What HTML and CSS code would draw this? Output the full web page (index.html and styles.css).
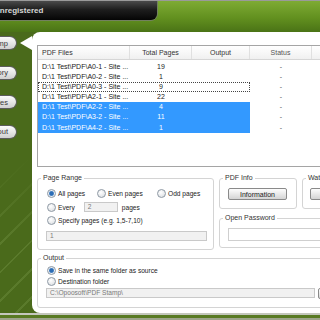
FILE: index.html
```html
<!DOCTYPE html>
<html lang="en">
<head>
    <meta charset="UTF-8">
    <title>PDF Stamp</title>
    <link rel="stylesheet" href="styles.css">
</head>
<body>
    <div class="app">
        <header class="topbar">
            <div class="titlebar"><span class="title">Unregistered</span></div>
        </header>

        <div class="main">
            <nav class="sidebar">
                <div class="navbtn">Stamp</div>
                <div class="navbtn">History</div>
                <div class="navbtn">Files</div>
                <div class="navbtn">About</div>
            </nav>

            <section class="panel">
                <div class="filelist">
                    <div class="list-head">
                        <span class="col-name">PDF Files</span>
                        <span class="col-pages">Total Pages</span>
                        <span class="col-out">Output</span>
                        <span class="col-status">Status</span>
                        <span class="col-rest"></span>
                    </div>
                    <div class="row">
                        <div class="sel"><span class="col-name">D:\1 Test\PDF\A0-1 - Site ...</span><span class="col-pages">19</span><span class="col-out"></span></div>
                        <span class="col-status">-</span>
                    </div>
                    <div class="row">
                        <div class="sel"><span class="col-name">D:\1 Test\PDF\A0-2 - Site ...</span><span class="col-pages">1</span><span class="col-out"></span></div>
                        <span class="col-status">-</span>
                    </div>
                    <div class="row">
                        <div class="sel focus"><span class="col-name">D:\1 Test\PDF\A0-3 - Site ...</span><span class="col-pages">9</span><span class="col-out"></span></div>
                        <span class="col-status">-</span>
                    </div>
                    <div class="row">
                        <div class="sel"><span class="col-name">D:\1 Test\PDF\A2-1 - Site ...</span><span class="col-pages">22</span><span class="col-out"></span></div>
                        <span class="col-status">-</span>
                    </div>
                    <div class="row">
                        <div class="sel selected"><span class="col-name">D:\1 Test\PDF\A2-2 - Site ...</span><span class="col-pages">4</span><span class="col-out"></span></div>
                        <span class="col-status">-</span>
                    </div>
                    <div class="row">
                        <div class="sel selected"><span class="col-name">D:\1 Test\PDF\A3-2 - Site ...</span><span class="col-pages">11</span><span class="col-out"></span></div>
                        <span class="col-status">-</span>
                    </div>
                    <div class="row">
                        <div class="sel selected"><span class="col-name">D:\1 Test\PDF\A4-2 - Site ...</span><span class="col-pages">1</span><span class="col-out"></span></div>
                        <span class="col-status">-</span>
                    </div>
                </div>

                <div class="options">
                    <fieldset class="group page-range">
                        <legend>Page Range</legend>
                        <div class="group-body">
                            <div class="line">
                                <label class="opt w-all"><i class="radio checked"></i>All pages</label>
                                <label class="opt w-even"><i class="radio"></i>Even pages</label>
                                <label class="opt"><i class="radio"></i>Odd pages</label>
                            </div>
                            <div class="line">
                                <label class="opt"><i class="radio"></i>Every</label>
                                <span class="field every-field">2</span>
                                <span class="every-unit">pages</span>
                            </div>
                            <div class="line">
                                <label class="opt"><i class="radio"></i>Specify pages (e.g. 1,5-7,10)</label>
                            </div>
                            <div class="field pages-field">1</div>
                        </div>
                    </fieldset>

                    <div class="right-col">
                        <div class="info-row">
                            <fieldset class="group pdf-info">
                                <legend>PDF Info</legend>
                                <div class="group-body">
                                    <button class="btn info-btn">Information</button>
                                </div>
                            </fieldset>
                            <fieldset class="group watermark">
                                <legend>Watermark</legend>
                                <div class="group-body">
                                    <button class="btn wm-btn">Settings</button>
                                </div>
                            </fieldset>
                        </div>
                        <fieldset class="group password">
                            <legend>Open Password</legend>
                            <div class="group-body">
                                <div class="field pass-field"></div>
                            </div>
                        </fieldset>
                    </div>
                </div>

                <fieldset class="group output">
                    <legend>Output</legend>
                    <div class="group-body">
                        <div class="line out-line">
                            <label class="opt"><i class="radio checked"></i>Save in the same folder as source</label>
                        </div>
                        <div class="line out-line">
                            <label class="opt"><i class="radio"></i>Destination folder</label>
                        </div>
                        <div class="path-row">
                            <div class="field path-field">C:\Opoosoft\PDF Stamp\</div>
                            <button class="btn browse-btn">...</button>
                        </div>
                    </div>
                </fieldset>
            </section>
        </div>

        <footer class="bottombar"></footer>
    </div>
</body>
</html>
```

FILE: styles.css
```css
body {
    margin: 0;
    width: 320px;
    height: 320px;
    overflow: hidden;
    font-family: "Liberation Sans", Arial, sans-serif;
    background-color: #4a6a1b;
}

.app {
    width: 380px;
    height: 320px;
    display: flex;
    flex-direction: column;
}

/* top bar */
.topbar {
    height: 31px;
    border-top: 1px solid #9a9a9a;
    background: linear-gradient(#7eab34, #62901f 55%, #4a7316);
}

.titlebar {
    width: 157px;
    height: 19px;
    background: linear-gradient(#4a4a4a, #1e1e1e 45%, #050505);
    border-bottom-right-radius: 6px;
    box-shadow: 0 1px 0 #738060, 1px 0 0 #738060;
    display: flex;
    align-items: center;
    overflow: hidden;
}

.title {
    margin-left: -6px;
    color: #d6d6d6;
    font-size: 8px;
    font-weight: bold;
    white-space: nowrap;
}

.main {
    display: flex;
    height: 281px;
}

/* side navigation */
.sidebar {
    width: 32px;
    flex-shrink: 0;
    display: flex;
    flex-direction: column;
    gap: 15.5px;
    padding-top: 4px;
    background:
        linear-gradient(#4a6a1b 45%, rgba(74, 106, 27, 0) 75%),
        repeating-linear-gradient(135deg, #4a6a1b 0 9px, #5a7a2b 9px 11px, #4a6a1b 11px 20px);
}

.navbtn {
    width: 17px;
    height: 14px;
    box-sizing: border-box;
    border: 1px solid #5d5d5d;
    border-left: none;
    border-radius: 0 7px 7px 0;
    background: linear-gradient(#fbfbfb, #e6e6e6 50%, #cfcfcf);
    display: flex;
    justify-content: flex-end;
    align-items: center;
    padding-right: 8px;
    overflow: hidden;
    white-space: nowrap;
    font-size: 7.5px;
    color: #3a3a3a;
}

/* white panel */
.panel {
    flex: 1;
    position: relative;
    background-color: #fff;
    border-radius: 8px 0 0 8px;
    padding: 13px 0 0 5px;
}

.panel::before {
    content: "";
    position: absolute;
    left: -12px;
    top: 4px;
    border-style: solid;
    border-width: 7px 12px 7px 0;
    border-color: transparent #fff transparent transparent;
}

/* file list */
.filelist {
    width: 330px;
    height: 120px;
    border: 1px solid #a5a5a5;
    font-size: 7px;
    color: #222;
}

.list-head {
    display: flex;
    height: 13px;
    line-height: 13px;
    background: linear-gradient(#ffffff, #f0f0f0);
    border-bottom: 1px solid #d6d6d6;
    margin-bottom: 2px;
    color: #333;
}

.list-head span {
    box-sizing: border-box;
    border-right: 1px solid #e0e0e0;
    text-align: center;
}

.list-head .col-name {
    text-align: left;
}

.list-head .col-rest {
    flex: 1;
    border-right: none;
}

.col-name {
    width: 92px;
    padding-left: 4px;
    box-sizing: border-box;
    white-space: nowrap;
    overflow: hidden;
}

.col-pages {
    width: 62px;
    text-align: center;
}

.col-out {
    width: 58px;
}

.col-status {
    width: 62px;
    text-align: center;
    color: #555;
}

.row {
    display: flex;
    height: 10.1px;
    line-height: 10.1px;
}

.sel {
    display: flex;
    width: 212px;
}

.sel.focus {
    outline: 1px dotted #444;
    outline-offset: -1px;
}

.sel.selected {
    background-color: #3399ff;
    color: #fff;
}

/* option groups */
.options {
    display: grid;
    grid-template-columns: 177px 1fr;
    column-gap: 5px;
    align-items: start;
    margin-top: 7px;
}

.group {
    margin: 0;
    padding: 0;
    min-width: 0;
    border: 1px solid #d4d4d4;
    border-radius: 3px;
    font-size: 6.6px;
    color: #222;
}

.group legend {
    margin-left: 3px;
    padding: 0 2px;
    font-size: 7px;
    line-height: 8px;
    color: #333;
}

.page-range .group-body {
    padding: 5px 7px 8.5px 9px;
}

.line {
    display: flex;
    align-items: center;
    height: 13.5px;
}

.opt {
    display: flex;
    align-items: center;
    white-space: nowrap;
}

.w-all {
    width: 50px;
}

.w-even {
    width: 60px;
}

.radio {
    width: 7px;
    height: 7px;
    border-radius: 50%;
    border: 1px solid #8e99a4;
    background: radial-gradient(circle at 40% 35%, #ffffff, #d6dade);
    margin-right: 2px;
    flex-shrink: 0;
}

.radio.checked {
    background: radial-gradient(circle, #2c6db5 0 1.8px, #7fa9d6 2.4px, #e9eef4 3px);
}

.field {
    box-sizing: border-box;
    height: 10px;
    line-height: 8px;
    border: 1px solid #c9c9c9;
    background-color: #f1f1f1;
    color: #7a7a7a;
    padding-left: 3px;
    white-space: nowrap;
}

.every-field {
    width: 34px;
    margin-left: 9px;
}

.every-unit {
    margin-left: 4px;
}

.pages-field {
    width: 161px;
    margin: 3px 0 0 -1px;
}

.right-col {
    display: flex;
    flex-direction: column;
    gap: 5px;
}

.info-row {
    display: flex;
    gap: 5px;
}

.pdf-info {
    width: 78px;
    box-sizing: border-box;
}

.pdf-info .group-body {
    padding: 6px 0 8px 8px;
}

.watermark {
    flex: 1;
}

.watermark .group-body {
    padding: 6px 0 8px 7px;
}

.btn {
    display: block;
    box-sizing: border-box;
    height: 12px;
    padding: 0;
    border: 1px solid #8a8a8a;
    border-radius: 2px;
    background: linear-gradient(#fdfdfd, #e9e9e9 50%, #d4d4d4);
    font-family: "Liberation Sans", Arial, sans-serif;
    font-size: 7px;
    color: #222;
}

.info-btn {
    width: 59px;
}

.wm-btn {
    width: 60px;
}

.password .group-body {
    padding: 6px 0 6px 8px;
}

.pass-field {
    height: 13px;
    background-color: #fff;
    border-color: #cfcfcf;
}

.output {
    margin-top: 4px;
}

.output .group-body {
    padding: 2.5px 0 8px 9px;
}

.out-line {
    height: 11.5px;
}

.path-row {
    display: flex;
    gap: 3px;
    margin: 0.5px 0 0 -1px;
}

.path-field {
    width: 269px;
}

.browse-btn {
    width: 24px;
    height: 11px;
}

.bottombar {
    height: 7px;
    background: linear-gradient(#c4c7bd 0 2px, #587a22 2px 5px, #9ea48c 5px);
}
```
